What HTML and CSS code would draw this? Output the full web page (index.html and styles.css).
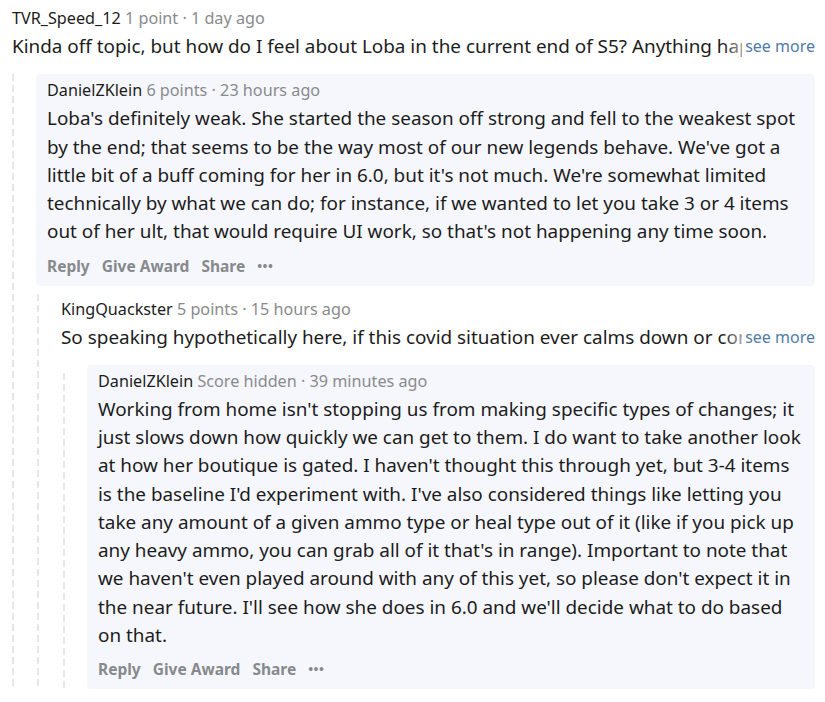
FILE: index.html
```html
<!DOCTYPE html>
<html>
<head>
<meta charset="utf-8">
<link rel="stylesheet" href="styles.css">
</head>
<body>
<div class="page">
  <div class="comment top">
    <div class="meta"><span class="user">TVR_Speed_12</span> <span class="muted">1 point · 1 day ago</span></div>
    <div class="body trunc"><span class="clip">Kinda off topic, but how do I feel about Loba in the current end of S5? Anything happening with her kit in the next patch or two?</span><span class="fade"></span><span class="more">see more</span></div>
  </div>
  <div class="thread">
    <div class="line"></div>
    <div class="children">
      <div class="comment boxed">
        <div class="meta"><span class="user">DanielZKlein</span> <span class="muted">6 points · 23 hours ago</span></div>
        <div class="body">Loba's definitely weak. She started the season off strong and fell to the weakest spot by the end; that seems to be the way most of our new legends behave. We've got a little bit of a buff coming for her in 6.0, but it's not much. We're somewhat limited technically by what we can do; for instance, if we wanted to let you take 3 or 4 items out of her ult, that would require UI work, so that's not happening any time soon.</div>
        <div class="actions"><span>Reply</span><span>Give Award</span><span>Share</span><span class="dots">•••</span></div>
      </div>
      <div class="thread t2">
        <div class="line"></div>
        <div class="children">
          <div class="comment plain">
            <div class="meta"><span class="user">KingQuackster</span> <span class="muted">5 points · 15 hours ago</span></div>
            <div class="body trunc"><span class="clip">So speaking hypothetically here, if this covid situation ever calms down or completely goes away, would you guys consider changing her ult?</span><span class="fade"></span><span class="more">see more</span></div>
          </div>
          <div class="thread t3">
            <div class="line"></div>
            <div class="children">
              <div class="comment boxed">
                <div class="meta"><span class="user">DanielZKlein</span> <span class="muted">Score hidden · 39 minutes ago</span></div>
                <div class="body">Working from home isn't stopping us from making specific types of changes; it just slows down how quickly we can get to them. I do want to take another look at how her boutique is gated. I haven't thought this through yet, but 3-4 items is the baseline I'd experiment with. I've also considered things like letting you take any amount of a given ammo type or heal type out of it (like if you pick up any heavy ammo, you can grab all of it that's in range). Important to note that we haven't even played around with any of this yet, so please don't expect it in the near future. I'll see how she does in 6.0 and we'll decide what to do based on that.</div>
                <div class="actions"><span>Reply</span><span>Give Award</span><span>Share</span><span class="dots">•••</span></div>
              </div>
            </div>
          </div>
        </div>
      </div>
    </div>
  </div>
</div>
</body>
</html>
```

FILE: styles.css
```css
html, body {
  margin: 0;
  padding: 0;
  background: #ffffff;
}
.page {
  padding: 0 10px 0 11px;
  font-family: "Noto Sans", "Open Sans", sans-serif;
  color: #1c1c1c;
}
.comment {
  display: flex;
  flex-direction: column;
}
.comment.top {
  padding: 8px 0 14px 1px;
}
.meta {
  font-family: "Noto Sans", sans-serif;
  font-size: 16.2px;
  line-height: 20px;
  color: #1c1c1c;
}
.meta .muted {
  color: #898b8d;
}
.body {
  font-size: 18.9px;
  line-height: 28.25px;
  margin-top: 4px;
}
.trunc {
  position: relative;
  white-space: nowrap;
  overflow: hidden;
}
.trunc .clip {
  display: block;
  overflow: hidden;
  margin-right: 68px;
}
.trunc .fade {
  position: absolute;
  right: 68px;
  top: 0;
  width: 24px;
  height: 100%;
  background: linear-gradient(to right, rgba(255,255,255,0), rgba(255,255,255,0.75));
}
.trunc .more {
  position: absolute;
  right: 0;
  top: 0;
  font-size: 16px;
  color: #4f7ca6;
  background: #fff;
  padding-left: 3px;
}
.thread {
  display: flex;
}
.thread .line {
  flex: 0 0 25px;
  width: 25px;
  background: repeating-linear-gradient(to bottom, #e6e7e9 0 7px, transparent 7px 11px) no-repeat 1px 0 / 2px 100%;
}
.children {
  flex: 1;
  min-width: 0;
}
.boxed {
  background: #f6f7fc;
  border-radius: 4px;
  padding: 6px 11px 10px 11px;
}
.plain {
  padding: 13px 0 14px 0;
}
.thread.t2 .line {
  margin-top: 8px;
}
.thread.t3 {
  margin-left: 1px;
}
.actions {
  display: flex;
  gap: 12px;
  margin-top: 10px;
  font-size: 15.5px;
  line-height: 20px;
  font-weight: 700;
  color: #878a8c;
}
.actions .dots {
  font-size: 13px;
  letter-spacing: 0.5px;
}
```
